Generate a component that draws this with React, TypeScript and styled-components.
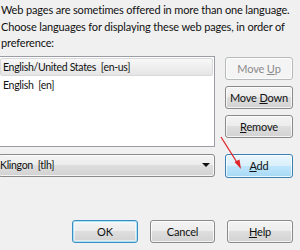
import React from "react";
import styled, { createGlobalStyle, css } from "styled-components";

const GlobalStyle = createGlobalStyle`
  html, body {
    margin: 0;
    padding: 0;
    background: #f0f0f0;
  }
  body {
    font-family: Lato, "Noto Sans", sans-serif;
    font-size: 11px;
    letter-spacing: -0.15px;
    color: #111;
  }
`;

const Page = styled.div`
  position: relative;
  width: 300px;
  height: 250px;
  overflow: hidden;
  background: #f0f0f0;
  padding: 2px 7px 0 0;
  box-sizing: border-box;
`;

const Intro = styled.p`
  margin: 0 0 0 1px;
  line-height: 16.5px;
  white-space: nowrap;
`;

const Body = styled.div`
  display: grid;
  grid-template-columns: 217px 68px;
  column-gap: 10px;
  row-gap: 7px;
  margin: 4px 0 0 -2px;
`;

const ListBox = styled.div`
  height: 91px;
  box-sizing: border-box;
  background: #fff;
  border: 1px solid #9a9ea4;
  padding: 1px;
`;

const ListItem = styled.div<{ $selected?: boolean }>`
  height: 18px;
  line-height: 16px;
  padding-left: 2px;
  box-sizing: border-box;
  border: 1px solid transparent;
  border-radius: 2px;
  white-space: nowrap;
  font-size: 10.5px;
  letter-spacing: -0.3px;
  ${(p) =>
    p.$selected &&
    css`
      border-color: #d9d9d9;
      background: linear-gradient(#f8f8f8, #e5e5e5);
    `}
`;

const ButtonColumn = styled.div`
  display: flex;
  flex-direction: column;
  gap: 6px;
  padding-top: 1px;
`;

type Variant = "normal" | "disabled" | "hot" | "default";

const Button = styled.button<{ $variant?: Variant; $w?: number; $h?: number }>`
  width: ${(p) => p.$w ?? 68}px;
  height: ${(p) => p.$h ?? 23}px;
  padding: 0;
  font: inherit;
  letter-spacing: inherit;
  color: #111;
  border: 1px solid #8a8a8a;
  border-radius: 3px;
  background: linear-gradient(#f4f4f4 0%, #ececec 50%, #dedede 50%, #d2d2d2 100%);
  box-shadow: inset 0 0 0 1px rgba(255, 255, 255, 0.75);
  ${(p) =>
    p.$variant === "disabled" &&
    css`
      color: #8a8a8a;
      border-color: #b6babc;
      background: #f4f4f4;
    `}
  ${(p) =>
    p.$variant === "hot" &&
    css`
      border-color: #3c7fb1;
      background: linear-gradient(#eaf6fd 0%, #d9f0fc 50%, #bee6fd 50%, #a7d9f5 100%);
    `}
  ${(p) =>
    p.$variant === "default" &&
    css`
      border-color: #3c8fc0;
      box-shadow: inset 0 0 0 1px #a9e2f7, inset 0 0 0 2px rgba(255, 255, 255, 0.5);
    `}
  u {
    text-decoration: underline;
    text-underline-offset: 1px;
  }
`;

const Combo = styled.div`
  height: 23px;
  box-sizing: border-box;
  border: 1px solid #8a8a8a;
  border-radius: 3px;
  background: linear-gradient(#f4f4f4 0%, #ececec 50%, #dedede 50%, #d2d2d2 100%);
  box-shadow: inset 0 0 0 1px rgba(255, 255, 255, 0.75);
  display: flex;
  align-items: center;
  justify-content: space-between;
  padding: 0 4px 0 1px;
  white-space: nowrap;
  font-size: 10.5px;
  letter-spacing: -0.3px;
`;

const Caret = styled.span`
  width: 0;
  height: 0;
  border-left: 4px solid transparent;
  border-right: 4px solid transparent;
  border-top: 4px solid #111;
`;

const Footer = styled.div`
  display: flex;
  justify-content: flex-end;
  gap: 12px;
  margin-top: 42px;
`;

const Arrow = styled.svg`
  position: absolute;
  left: 0;
  top: 0;
  pointer-events: none;
`;

export default function App() {
  return (
    <>
      <GlobalStyle />
      <Page>
        <Intro>
          Web pages are sometimes offered in more than one language.
          <br />
          Choose languages for displaying these web pages, in order of
          <br />
          preference:
        </Intro>
        <Body>
          <ListBox>
            <ListItem $selected>English/United States&nbsp; [en-us]</ListItem>
            <ListItem>English&nbsp; [en]</ListItem>
          </ListBox>
          <ButtonColumn>
            <Button $variant="disabled">
              Move <u>U</u>p
            </Button>
            <Button>
              Move <u>D</u>own
            </Button>
            <Button>
              <u>R</u>emove
            </Button>
          </ButtonColumn>
          <Combo>
            <span>Klingon&nbsp; [tlh]</span>
            <Caret />
          </Combo>
          <Button $variant="hot" $h={24}>
            <u>A</u>dd
          </Button>
        </Body>
        <Footer>
          <Button $variant="default" $w={66}>
            OK
          </Button>
          <Button $w={65}>Cancel</Button>
          <Button $w={66}>
            <u>H</u>elp
          </Button>
        </Footer>
        <Arrow width="300" height="250" viewBox="0 0 300 250">
          <line x1="221" y1="137" x2="238" y2="164" stroke="#e0262b" strokeWidth="1.3" />
          <polygon points="241,169 234.5,162 239.5,159.5" fill="#e0262b" />
        </Arrow>
      </Page>
    </>
  );
}
